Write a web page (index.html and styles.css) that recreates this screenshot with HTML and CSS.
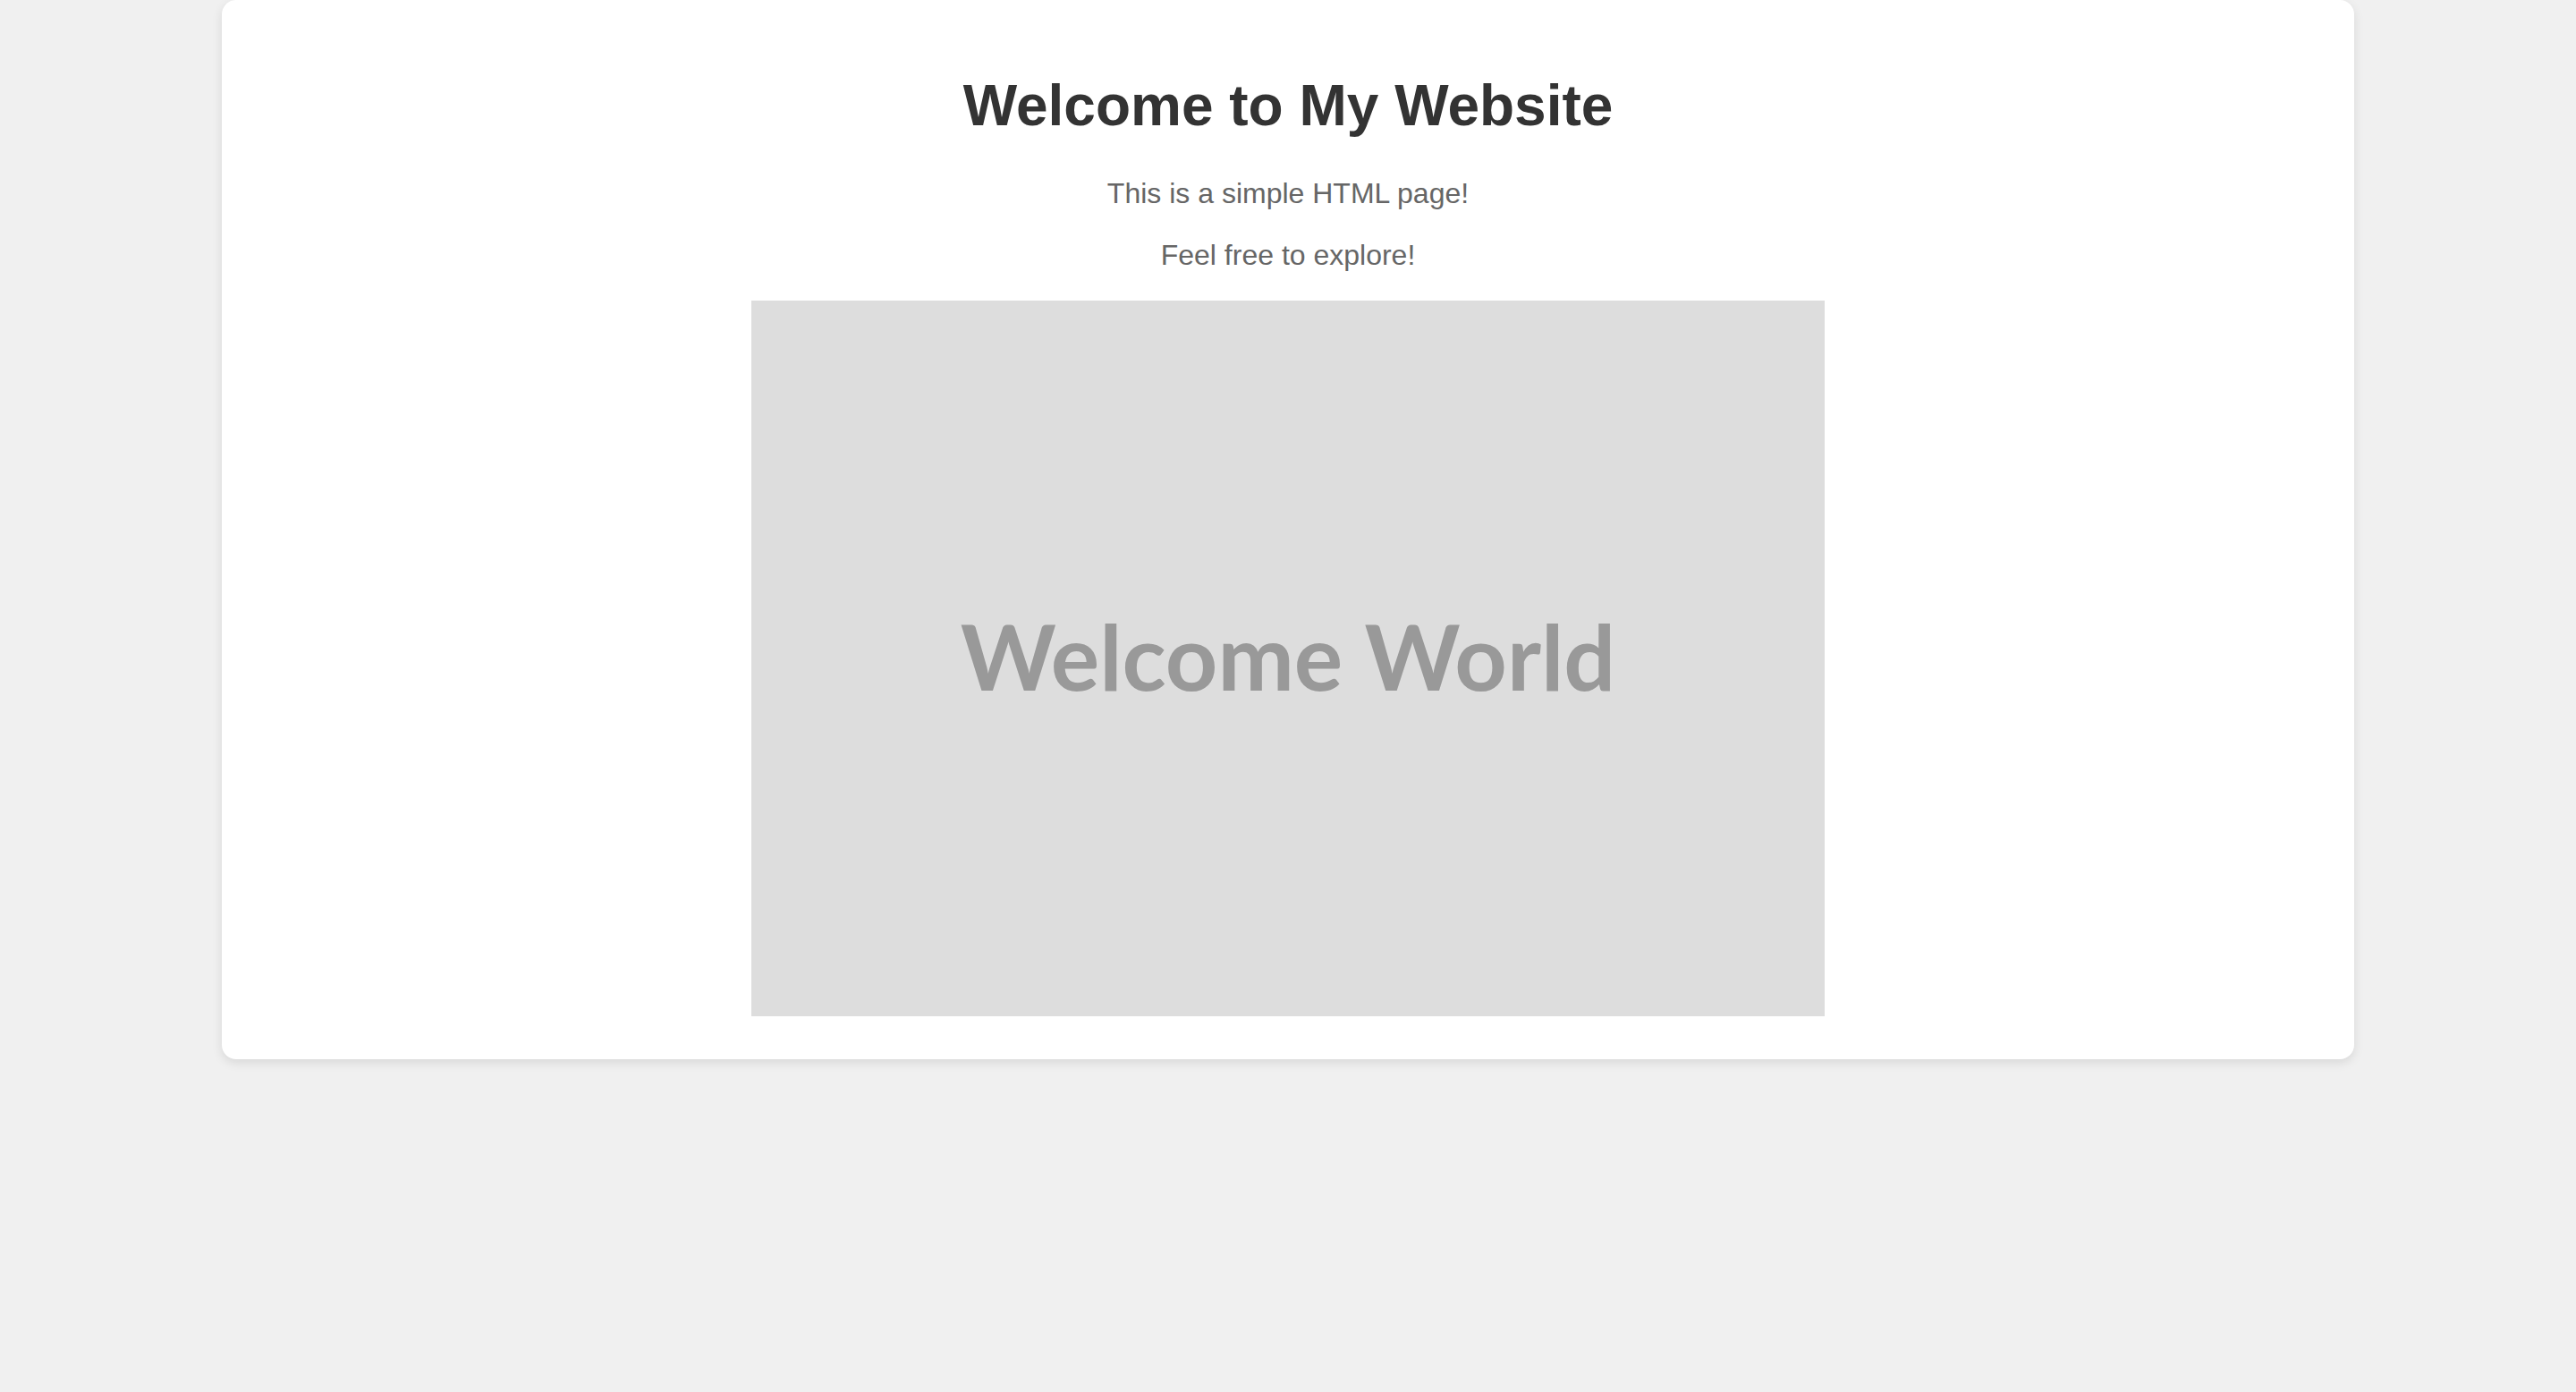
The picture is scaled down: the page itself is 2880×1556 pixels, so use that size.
FILE: index.html
```html
<!DOCTYPE html>
<html lang="en">
<head>
<meta charset="utf-8">
<title>Welcome to My Website</title>
<link rel="stylesheet" href="styles.css">
</head>
<body>
  <div class="card">
    <h1 class="title">Welcome to My Website</h1>
    <p class="text">This is a simple HTML page!</p>
    <p class="text">Feel free to explore!</p>
    <div class="placeholder" role="img" aria-label="Welcome World">
      <span class="placeholder-text">Welcome World</span>
    </div>
  </div>
</body>
</html>
```

FILE: styles.css
```css
html, body {
  margin: 0;
  padding: 0;
}

body {
  background: #f0f0f0;
  font-family: "Liberation Sans", Arial, Helvetica, sans-serif;
  min-height: 1556px;
}

.card {
  width: 2384px;
  box-sizing: border-box;
  margin: 0 auto;
  padding: 38px 40px 48px;
  background: #ffffff;
  border-radius: 16px;
  box-shadow: 0 4px 12px rgba(0, 0, 0, 0.1);
  text-align: center;
}

.title {
  font-size: 64px;
  font-weight: 700;
  color: #333333;
  margin: 43px 0;
}

.text {
  font-size: 32px;
  color: #666666;
  margin: 32px 0;
}

.placeholder {
  width: 1200px;
  height: 800px;
  margin: 0 auto;
  background: #dddddd;
  display: flex;
  align-items: center;
  justify-content: center;
}

.placeholder-text {
  font-family: Lato, "Open Sans", sans-serif;
  font-weight: 700;
  font-size: 102px;
  color: #999999;
  line-height: 1;
  position: relative;
  top: -3px;
}
```
